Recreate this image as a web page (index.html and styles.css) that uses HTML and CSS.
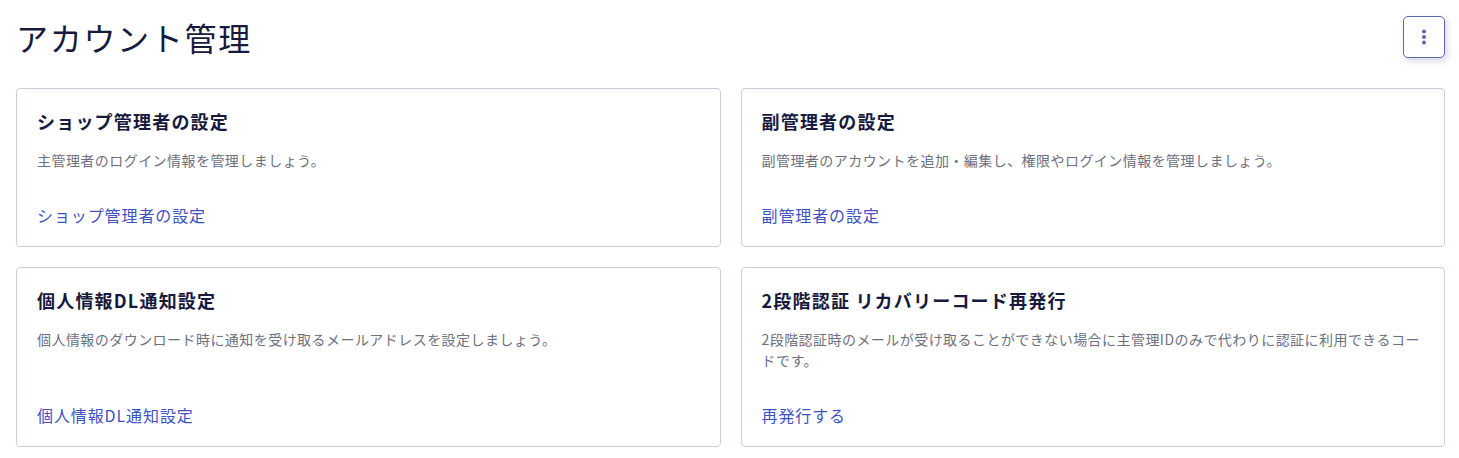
FILE: index.html
```html
<!DOCTYPE html>
<html lang="ja">
<head>
<meta charset="utf-8">
<title>アカウント管理</title>
<link rel="stylesheet" href="styles.css">
</head>
<body>
<div class="page">
  <header class="page-header">
    <h1 class="page-title">アカウント管理</h1>
    <button class="menu-button" type="button" aria-label="メニュー">
      <svg width="6" height="18" viewBox="0 0 6 18"><circle cx="3" cy="3.5" r="2" fill="#5d67a8"/><circle cx="3" cy="9" r="2" fill="#5d67a8"/><circle cx="3" cy="14.5" r="2" fill="#5d67a8"/></svg>
    </button>
  </header>
  <div class="card-grid">
    <section class="card">
      <h2 class="card-title">ショップ管理者の設定</h2>
      <p class="card-desc">主管理者のログイン情報を管理しましょう。</p>
      <a class="card-link" href="#">ショップ管理者の設定</a>
    </section>
    <section class="card">
      <h2 class="card-title">副管理者の設定</h2>
      <p class="card-desc">副管理者のアカウントを追加・編集し、権限やログイン情報を管理しましょう。</p>
      <a class="card-link" href="#">副管理者の設定</a>
    </section>
    <section class="card">
      <h2 class="card-title">個人情報DL通知設定</h2>
      <p class="card-desc">個人情報のダウンロード時に通知を受け取るメールアドレスを設定しましょう。</p>
      <a class="card-link" href="#">個人情報DL通知設定</a>
    </section>
    <section class="card">
      <h2 class="card-title">2段階認証 リカバリーコード再発行</h2>
      <p class="card-desc">2段階認証時のメールが受け取ることができない場合に主管理IDのみで代わりに認証に利用できるコードです。</p>
      <a class="card-link" href="#">再発行する</a>
    </section>
  </div>
</div>
</body>
</html>
```
FILE: styles.css
```css
* { box-sizing: border-box; }
html, body { margin: 0; padding: 0; background: #ffffff; }
body {
  font-family: "Noto Sans CJK JP", "Noto Sans", sans-serif;
  color: #171a3c;
}
.page {
  padding: 16px 14px 0 16px;
}
.page-header {
  display: flex;
  align-items: center;
  justify-content: space-between;
  margin-bottom: 30px;
}
.page-title {
  margin: 0;
  font-size: 32px;
  line-height: 42px;
  font-weight: 400;
  letter-spacing: 1.7px;
  color: #171a3c;
}
.menu-button {
  width: 42px;
  height: 42px;
  padding: 0;
  display: flex;
  align-items: center;
  justify-content: center;
  background: #ffffff;
  border: 1px solid #5f69aa;
  border-radius: 5px;
  box-shadow: 2px 3px 6px rgba(60, 70, 130, 0.22);
}
.card-grid {
  display: grid;
  grid-template-columns: 1fr 1fr;
  gap: 20px;
}
.card {
  display: flex;
  flex-direction: column;
  border: 1px solid #c8cee0;
  border-radius: 4px;
  padding: 20px 20px 19px 20px;
  min-height: 159px;
}
.card-title {
  margin: 0;
  font-size: 18px;
  line-height: 24px;
  font-weight: 700;
  letter-spacing: 1.2px;
  color: #171a3c;
}
.card-desc {
  margin: 17px 0 0 0;
  font-size: 14px;
  line-height: 21px;
  letter-spacing: 0.45px;
  color: #6d7080;
}
.card-link {
  margin-top: auto;
  padding-top: 32px;
  font-size: 16px;
  line-height: 24px;
  letter-spacing: 0.9px;
  color: #3f52c4;
  text-decoration: none;
}
```
